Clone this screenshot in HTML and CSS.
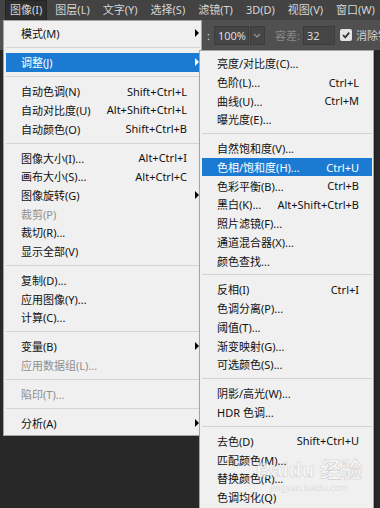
FILE: index.html
```html
<!DOCTYPE html>
<html lang="zh-CN">
<head>
    <meta charset="UTF-8">
    <meta name="viewport" content="width=device-width, initial-scale=1.0">
    <title>图像 - 调整</title>
    <link rel="stylesheet" href="styles.css">
</head>
<body>

    <!-- Menu bar -->
    <div class="menubar">
        <span class="mb-item active">图像(I)</span>
        <span class="mb-item">图层(L)</span>
        <span class="mb-item">文字(Y)</span>
        <span class="mb-item">选择(S)</span>
        <span class="mb-item">滤镜(T)</span>
        <span class="mb-item">3D(D)</span>
        <span class="mb-item">视图(V)</span>
        <span class="mb-item">窗口(W)</span>
    </div>

    <!-- Options bar (mostly hidden behind the menu) -->
    <div class="optbar">
        <span class="opt-text">:</span>
        <span class="field zoom">100%</span>
        <span class="field drop">
            <svg width="8" height="5" viewBox="0 0 8 5"><path d="M1 1 L4 4 L7 1" fill="none" stroke="#9a9a9a" stroke-width="1.2"/></svg>
        </span>
        <span class="opt-label">容差:</span>
        <span class="field tol">32</span>
        <span class="check">
            <svg width="10" height="10" viewBox="0 0 10 10"><path d="M2 5 L4.2 7.4 L8.2 2.6" fill="none" stroke="#333" stroke-width="1.8"/></svg>
        </span>
        <span class="opt-text">消除锯齿</span>
    </div>

    <div class="workspace"></div>

    <!-- Image menu -->
    <ul class="menu main-menu">
        <li class="item">模式(M)<span class="arrow"></span></li>
        <li class="sep"></li>
        <li class="item hover">调整(J)<span class="arrow"></span></li>
        <li class="sep"></li>
        <li class="item">自动色调(N)<span class="key">Shift+Ctrl+L</span></li>
        <li class="item">自动对比度(U)<span class="key">Alt+Shift+Ctrl+L</span></li>
        <li class="item">自动颜色(O)<span class="key">Shift+Ctrl+B</span></li>
        <li class="sep"></li>
        <li class="item">图像大小(I)...<span class="key">Alt+Ctrl+I</span></li>
        <li class="item">画布大小(S)...<span class="key">Alt+Ctrl+C</span></li>
        <li class="item">图像旋转(G)<span class="arrow"></span></li>
        <li class="item off">裁剪(P)</li>
        <li class="item">裁切(R)...</li>
        <li class="item">显示全部(V)</li>
        <li class="sep"></li>
        <li class="item">复制(D)...</li>
        <li class="item">应用图像(Y)...</li>
        <li class="item">计算(C)...</li>
        <li class="sep"></li>
        <li class="item">变量(B)<span class="arrow"></span></li>
        <li class="item off">应用数据组(L)...</li>
        <li class="sep"></li>
        <li class="item off">陷印(T)...</li>
        <li class="sep"></li>
        <li class="item">分析(A)<span class="arrow"></span></li>
    </ul>

    <!-- Adjustments submenu -->
    <ul class="menu sub-menu">
        <li class="item">亮度/对比度(C)...</li>
        <li class="item">色阶(L)...<span class="key">Ctrl+L</span></li>
        <li class="item">曲线(U)...<span class="key">Ctrl+M</span></li>
        <li class="item">曝光度(E)...</li>
        <li class="sep"></li>
        <li class="item">自然饱和度(V)...</li>
        <li class="item hover">色相/饱和度(H)...<span class="key">Ctrl+U</span></li>
        <li class="item">色彩平衡(B)...<span class="key">Ctrl+B</span></li>
        <li class="item">黑白(K)...<span class="key">Alt+Shift+Ctrl+B</span></li>
        <li class="item">照片滤镜(F)...</li>
        <li class="item">通道混合器(X)...</li>
        <li class="item">颜色查找...</li>
        <li class="sep"></li>
        <li class="item">反相(I)<span class="key">Ctrl+I</span></li>
        <li class="item">色调分离(P)...</li>
        <li class="item">阈值(T)...</li>
        <li class="item">渐变映射(G)...</li>
        <li class="item">可选颜色(S)...</li>
        <li class="sep"></li>
        <li class="item">阴影/高光(W)...</li>
        <li class="item">HDR 色调...</li>
        <li class="sep"></li>
        <li class="item">去色(D)<span class="key">Shift+Ctrl+U</span></li>
        <li class="item">匹配颜色(M)...</li>
        <li class="item">替换颜色(R)...</li>
        <li class="item">色调均化(Q)</li>
        <li class="item">&nbsp;</li>
    </ul>

    <!-- watermark -->
    <div class="watermark">
        <span class="wm-big">Baidu 经验</span>
        <span class="wm-small">jingyan.baidu.com</span>
    </div>

</body>
</html>
```

FILE: styles.css
```css
body {
    margin: 0;
    width: 380px;
    height: 508px;
    overflow: hidden;
    background-color: #282828;
    font-family: "Noto Sans", "Noto Sans CJK SC", sans-serif;
    font-size: 11px;
}
/* Menu bar */
.menubar {
    height: 20px;
    background-color: #434343;
    display: flex;
    gap: 3px;
    padding-left: 5px;
    overflow: hidden;
}
.mb-item {
    flex-shrink: 0;
    white-space: nowrap;
    line-height: 19px;
    padding: 0 5px;
    color: #d6d6d6;
    box-sizing: border-box;
    height: 20px;
}
.mb-item.active {
    background-color: #2e2e2e;
    border: 1px solid #252525;
    border-bottom: none;
    line-height: 18px;
    padding: 0 4px;
}
/* Options bar */
.optbar {
    height: 30px;
    background-color: #505050;
    display: flex;
    align-items: center;
    padding-left: 207px;
    color: #d0d0d0;
    overflow: hidden;
}
.optbar > * {
    flex-shrink: 0;
    white-space: nowrap;
}
.opt-text {
    margin-right: 4px;
}
.opt-label {
    color: #8a8a8a;
    margin: 0 3px 0 10px;
}
.field {
    height: 19px;
    line-height: 18px;
    background-color: #454545;
    border: 1px solid #3c3c3c;
    box-sizing: border-box;
    padding: 0 3px;
    color: #dcdcdc;
}
.zoom {
    width: 35px;
}
.drop {
    width: 15px;
    margin-left: 1px;
    display: flex;
    align-items: center;
    justify-content: center;
    padding: 0;
}
.tol {
    width: 32px;
}
.check {
    width: 12px;
    height: 12px;
    background-color: #e4e4e4;
    border-radius: 2px;
    margin: 0 4px 0 5px;
    display: flex;
    align-items: center;
    justify-content: center;
}
.workspace {
    height: 458px;
    background-color: #282828;
}
/* Menus */
.menu {
    position: absolute;
    margin: 0;
    padding: 3px 1px 3px 2px;
    list-style: none;
    background-color: #f0f0f0;
    border: 1px solid #a5a5a5;
    color: #111;
}
.main-menu {
    left: 3px;
    top: 20px;
    width: 194px;
}
.sub-menu {
    left: 199px;
    top: 50px;
    width: 170px;
    box-shadow: 1px 1px 2px rgba(0, 0, 0, 0.3);
}
.item {
    display: flex;
    align-items: center;
    height: 18.7px;
    padding: 0 13px 0 15px;
    white-space: nowrap;
}
.item.hover {
    background-color: #1b7bd3;
    color: white;
}
.item.off {
    color: #8f8f8f;
}
.key {
    margin-left: auto;
}
.arrow {
    margin-left: auto;
    margin-right: -12px;
    width: 0;
    height: 0;
    border-left: 4px solid #000;
    border-top: 4px solid transparent;
    border-bottom: 4px solid transparent;
}
.hover .arrow {
    border-left-color: white;
}
.sep {
    height: 1px;
    background-color: #d3d3d3;
    margin: 4.65px 0;
}
/* watermark */
.watermark {
    position: absolute;
    left: 256px;
    top: 458px;
    display: flex;
    flex-direction: column;
    align-items: center;
    color: rgba(255, 255, 255, 0.55);
    -webkit-text-stroke: 0.6px rgba(160, 160, 160, 0.45);
    pointer-events: none;
}
.wm-big {
    font-family: "Liberation Sans", "Noto Sans CJK SC", sans-serif;
    font-size: 21px;
    font-weight: bold;
    line-height: 24px;
}
.wm-small {
    font-size: 9px;
    line-height: 11px;
    -webkit-text-stroke: 0;
    color: rgba(200, 200, 200, 0.5);
}
```
